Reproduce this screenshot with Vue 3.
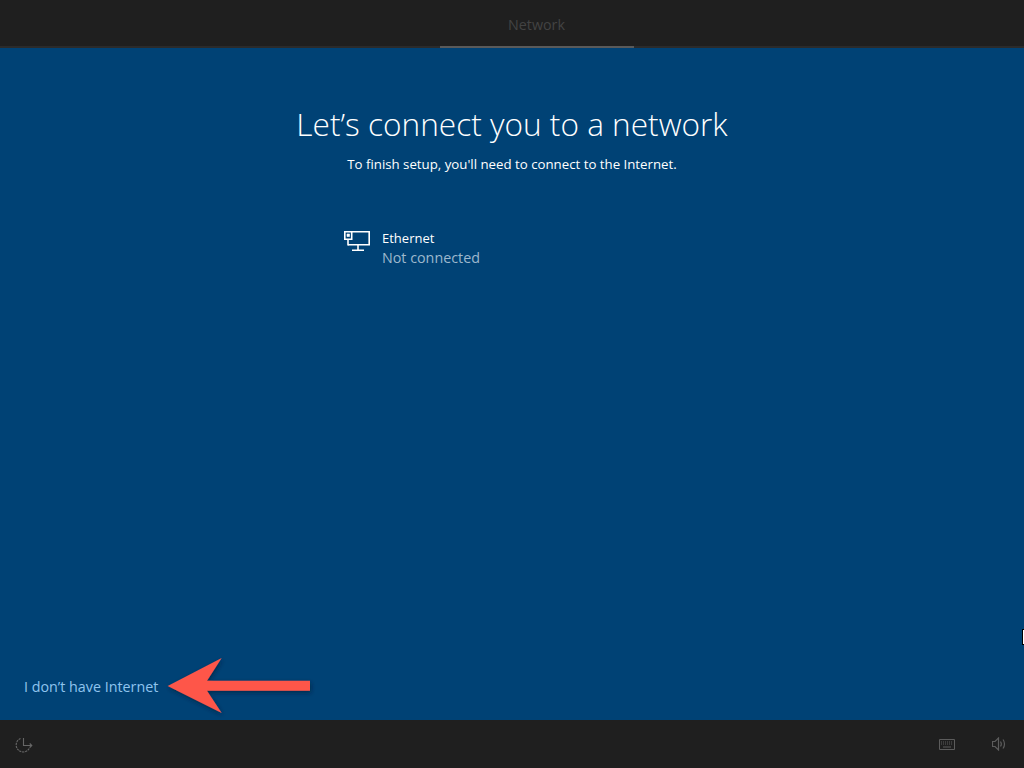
<script setup>
const title = "Let’s connect you to a network";
</script>

<template>
  <div class="page">
    <header class="topbar">
      <div class="tab">Network</div>
    </header>
    <main class="main">
      <h1 class="title">{{ title }}</h1>
      <p class="sub">To finish setup, you'll need to connect to the Internet.</p>
      <div class="net">
        <svg class="net-icon" width="26" height="22" viewBox="0 0 26 22" fill="none" stroke="#fff" stroke-width="1.6">
          <path d="M8 1.8H25.2V14.7H4" />
          <path d="M0.8 1.8H7.7V9.2H0.8Z" />
          <path d="M3 4H5.5V6.5H3Z" fill="#fff" stroke-width="0.6" />
          <path d="M4 9V15.5" />
          <path d="M14 14.7V20M8 20.2H20" />
        </svg>
        <div class="net-text">
          <div class="net-name">Ethernet</div>
          <div class="net-state">Not connected</div>
        </div>
      </div>
      <div class="spacer"></div>
      <a class="skip">I don’t have Internet</a>
      <svg class="arrow" width="160" height="70" viewBox="0 0 160 70">
        <defs>
          <filter id="sh" x="-10%" y="-20%" width="125%" height="145%">
            <feDropShadow dx="1" dy="2" stdDeviation="2" flood-color="#001a33" flood-opacity="0.6" />
          </filter>
        </defs>
        <path filter="url(#sh)" fill="#fe574a" d="M1.7 32 L55.7 4 L41 26.7 H144 V36.7 H41 L55.7 59 Z" />
      </svg>
      <span class="cursor"></span>
    </main>
    <footer class="bottombar">
      <svg class="clock" width="20" height="20" viewBox="0 0 20 20" fill="none" stroke="#666" stroke-width="1.1">
        <path d="M6.5 4.5A7 7 0 1 0 15.7 13.5" stroke-dasharray="2.2 0.8" />
        <path d="M9.5 4V11.5H17.5M15.7 9.5L17.8 11.5L15.7 13.5" />
      </svg>
      <div class="right-icons">
        <svg width="16" height="11" viewBox="0 0 16 11" fill="none" stroke="#5c5c5c" stroke-width="1">
          <path d="M0.5 0.5H15.5V10.5H0.5Z" />
          <path d="M2 3H14M2 5H14" stroke-dasharray="1 1" />
          <path d="M4 8H12" />
        </svg>
        <svg width="14" height="14" viewBox="0 0 14 14" fill="none" stroke="#5c5c5c" stroke-width="1.2">
          <path d="M0.5 4.5H3L6.5 1V13L3 9.5H0.5Z" />
          <path d="M8.5 4.5C9.5 6 9.5 8 8.5 9.5" />
          <path d="M11 2.5C13 5 13 9 11 11.5" />
        </svg>
      </div>
    </footer>
  </div>
</template>

<style scoped>
.page {
  width: 1024px;
  height: 768px;
  display: flex;
  flex-direction: column;
  overflow: hidden;
  background: #004275;
  font-family: "Open Sans", "Noto Sans", sans-serif;
}
.topbar {
  height: 48px;
  flex: none;
  background: linear-gradient(#1f1f1f 46px, #2b2b2b 46px);
  display: flex;
  justify-content: center;
  padding-left: 50px;
  box-sizing: border-box;
}
.tab {
  width: 194px;
  height: 48px;
  box-sizing: border-box;
  border-bottom: 2px solid #5a5a5a;
  color: #434343;
  font-size: 14.3px;
  line-height: 50px;
  text-align: center;
  margin-left: -1px;
}
.main {
  position: relative;
  flex: 1;
  display: flex;
  flex-direction: column;
  align-items: center;
}
.title {
  margin: 52px 0 0;
  font-size: 31.6px;
  font-weight: 300;
  line-height: 48px;
  color: #fff;
}
.sub {
  margin: 7px 0 0;
  font-size: 13.25px;
  line-height: 18px;
  color: #fff;
}
.net {
  align-self: flex-start;
  margin: 55px 0 0 344px;
  display: flex;
  gap: 12px;
}
.net-icon {
  margin-top: 2px;
}
.net-name {
  font-size: 13px;
  line-height: 20px;
  color: #fff;
}
.net-state {
  font-size: 14.3px;
  line-height: 20px;
  color: #9db8cd;
}
.spacer {
  flex: 1;
}
.skip {
  align-self: flex-start;
  margin: 0 0 23px 24px;
  font-size: 14.3px;
  line-height: 20px;
  color: #8fc4ee;
}
.arrow {
  position: absolute;
  left: 166px;
  top: 606px;
}
.cursor {
  position: absolute;
  right: 0;
  top: 581px;
  width: 2px;
  height: 16px;
  background: #fff;
  border-left: 1px solid #000;
  border-top: 1px solid #000;
  border-bottom: 1px solid #000;
  box-sizing: border-box;
}
.bottombar {
  height: 48px;
  flex: none;
  background: #1f1f1f;
  display: flex;
  align-items: center;
  justify-content: space-between;
  padding: 0 18px 0 14px;
  box-sizing: border-box;
}
.right-icons {
  display: flex;
  align-items: center;
  gap: 37px;
}
</style>
